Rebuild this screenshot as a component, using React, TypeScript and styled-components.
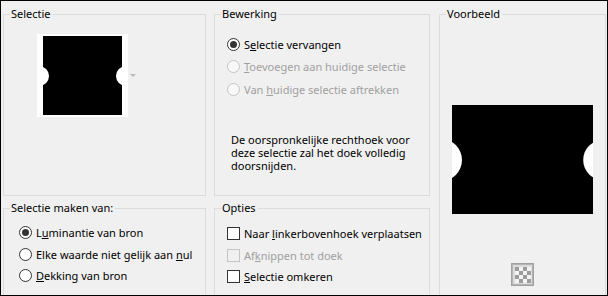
import React from "react";
import styled, { createGlobalStyle } from "styled-components";

const GlobalStyle = createGlobalStyle`
  body {
    margin: 0;
    font-family: "Noto Sans", "Open Sans", sans-serif;
    font-size: 11px;
    color: #000;
  }
`;

const App: React.FC = () => {
  return (
    <>
      <GlobalStyle />
      <Window>
        <Group style={{ gridArea: "sel" }}>
          <Legend>Selectie</Legend>
          <ThumbRow>
            <svg width="91" height="83" viewBox="0 0 91 83">
              <rect x="0" y="0" width="91" height="83" fill="#fff" />
              <rect x="6" y="2" width="79" height="79" fill="#000" />
              <circle cx="2.25" cy="42" r="9.75" fill="#fff" />
              <circle cx="88.75" cy="42" r="9.75" fill="#fff" />
            </svg>
            <DropArrow />
          </ThumbRow>
        </Group>

        <Group style={{ gridArea: "bew" }}>
          <Legend>Bewerking</Legend>
          <OptionList $top={11} $row={22.5}>
            <Option>
              <Radio $checked />
              <span>
                S<u>e</u>lectie vervangen
              </span>
            </Option>
            <Option $disabled>
              <Radio $disabled />
              <span>
                <u>T</u>oevoegen aan huidige selectie
              </span>
            </Option>
            <Option $disabled>
              <Radio $disabled />
              <span>
                Van <u>h</u>uidige selectie aftrekken
              </span>
            </Option>
          </OptionList>
          <Note>
            De oorspronkelijke rechthoek voor deze selectie zal het doek volledig
            doorsnijden.
          </Note>
        </Group>

        <PreviewGroup style={{ gridArea: "prev" }}>
          <Legend>Voorbeeld</Legend>
          <PreviewBody>
            <svg width="141" height="109" viewBox="0 0 141 109">
              <rect x="0" y="0" width="141" height="109" fill="#000" />
              <circle cx="-11.2" cy="55" r="21.2" fill="#fff" />
              <circle cx="151.2" cy="55" r="20" fill="#fff" />
            </svg>
            <CheckerButton>
              <svg width="23" height="23" viewBox="0 0 23 23">
                <rect x="0.5" y="0.5" width="22" height="22" fill="#dcdcdc" stroke="#a0a0a0" />
                <rect x="1.5" y="1.5" width="20" height="20" fill="none" stroke="#b4b4b4" />
                <rect x="4" y="4" width="16" height="16" fill="#f4f4f4" />
                {[0, 1, 2, 3].map((r) =>
                  [0, 1, 2, 3].map((c) =>
                    (r + c) % 2 === 0 ? (
                      <rect key={`${r}-${c}`} x={4 + c * 4} y={4 + r * 4} width="4" height="4" fill="#9c9c9c" />
                    ) : null
                  )
                )}
              </svg>
            </CheckerButton>
          </PreviewBody>
        </PreviewGroup>

        <Group style={{ gridArea: "src" }}>
          <Legend>Selectie maken van:</Legend>
          <OptionList $top={6} $left={15}>
            <Option>
              <Radio $checked />
              <span>
                L<u>u</u>minantie van bron
              </span>
            </Option>
            <Option>
              <Radio />
              <span>
                Elke waarde niet gelijk aan <u>n</u>ul
              </span>
            </Option>
            <Option>
              <Radio />
              <span>
                <u>D</u>ekking van bron
              </span>
            </Option>
          </OptionList>
        </Group>

        <Group style={{ gridArea: "opt" }}>
          <Legend>Opties</Legend>
          <OptionList $top={7}>
            <Option>
              <Check />
              <span>
                Naar <u>l</u>inkerbovenhoek verplaatsen
              </span>
            </Option>
            <Option $disabled>
              <Check $disabled />
              <span>
                Af<u>k</u>nippen tot doek
              </span>
            </Option>
            <Option>
              <Check />
              <span>
                <u>S</u>electie omkeren
              </span>
            </Option>
          </OptionList>
        </Group>
      </Window>
    </>
  );
};

const Window = styled.div`
  width: 608px;
  height: 296px;
  box-sizing: border-box;
  border: 1px solid #000;
  background: #f0f0f0;
  overflow: hidden;
  padding: 5px 0 0 2px;
  display: grid;
  grid-template-columns: 203px 216px 168px;
  grid-template-rows: 190px 120px;
  grid-template-areas:
    "sel bew prev"
    "src opt prev";
  column-gap: 8px;
  row-gap: 4px;
`;

const Group = styled.fieldset`
  margin: 0;
  padding: 0;
  min-inline-size: 0;
  border: 1px solid #dcdcdc;
  display: flex;
  flex-direction: column;
`;

const PreviewGroup = styled(Group)`
  margin-left: 1px;
`;

const Legend = styled.legend`
  margin-left: 6px;
  padding: 0 2px 0 1px;
  line-height: 16px;
`;

const ThumbRow = styled.div`
  display: flex;
  align-items: center;
  gap: 2px;
  padding: 12px 0 0 33px;
`;

const DropArrow = styled.span`
  width: 0;
  height: 0;
  border-left: 3px solid transparent;
  border-right: 3px solid transparent;
  border-top: 3px solid #b8b8b8;
`;

const OptionList = styled.div<{ $top: number; $left?: number; $row?: number }>`
  display: flex;
  flex-direction: column;
  padding: ${(p) => p.$top}px 0 0 ${(p) => p.$left ?? 12}px;

  & > label {
    height: ${(p) => p.$row ?? 21.5}px;
  }
`;

const Option = styled.label<{ $disabled?: boolean }>`
  display: flex;
  align-items: center;
  gap: 4px;
  white-space: nowrap;
  color: ${(p) => (p.$disabled ? "#a0a0a0" : "#000")};
`;

const Radio = styled.span<{ $checked?: boolean; $disabled?: boolean }>`
  flex: none;
  width: 13px;
  height: 13px;
  box-sizing: border-box;
  border-radius: 50%;
  border: 1px solid ${(p) => (p.$disabled ? "#c4c4c4" : "#333")};
  background: ${(p) => (p.$disabled ? "#f8f8f8" : "#fff")};
  display: flex;
  align-items: center;
  justify-content: center;

  &::after {
    content: "";
    display: ${(p) => (p.$checked ? "block" : "none")};
    width: 7px;
    height: 7px;
    border-radius: 50%;
    background: #333;
  }
`;

const Check = styled.span<{ $disabled?: boolean }>`
  flex: none;
  width: 13px;
  height: 13px;
  box-sizing: border-box;
  border: 1px solid ${(p) => (p.$disabled ? "#c4c4c4" : "#333")};
  background: ${(p) => (p.$disabled ? "transparent" : "#fff")};
`;

const Note = styled.p`
  margin: 32px 0 0 16px;
  width: 190px;
  line-height: 13px;
`;

const PreviewBody = styled.div`
  display: flex;
  flex-direction: column;
  align-items: center;
  padding-top: 83px;
`;

const CheckerButton = styled.div`
  margin-top: 49px;
  width: 23px;
  height: 23px;
  display: flex;
`;

export default App;
